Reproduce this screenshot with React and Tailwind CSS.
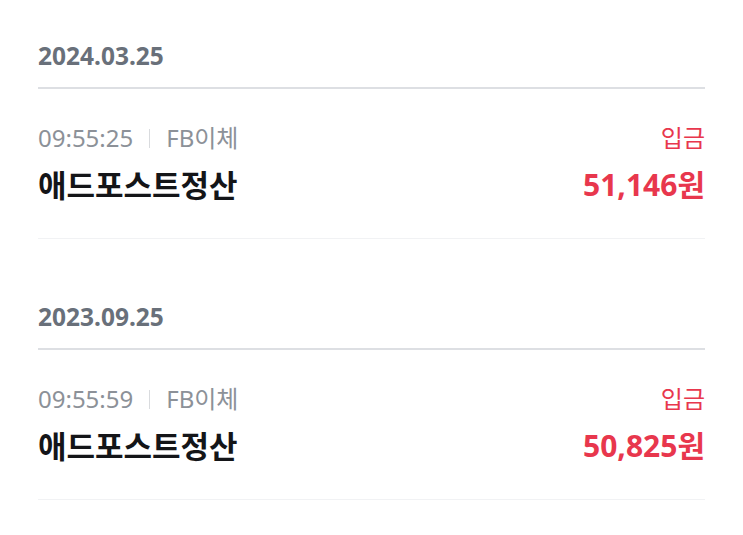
import React from 'react';

const items = [
  { date: '2024.03.25', time: '09:55:25', type: 'FB이체', title: '애드포스트정산', kind: '입금', amount: '51,146' },
  { date: '2023.09.25', time: '09:55:59', type: 'FB이체', title: '애드포스트정산', kind: '입금', amount: '50,825' },
];

const font = { fontFamily: '"Noto Sans", "Noto Sans CJK KR", sans-serif' };

export default function App() {
  return (
    <div className="w-[743px] h-[535px] bg-white px-[38px] pt-[40px]" style={font}>
      {items.map((it, i) => (
        <div key={i} className={i > 0 ? 'mt-[62px]' : ''}>
          <div className="h-[32px] leading-[32px] text-[24.5px] font-bold text-[#69707a]">{it.date}</div>
          <div className="mt-[15px] h-[2px] bg-[#dddfe3]"></div>

          <div className="mt-[33px] flex items-center justify-between h-[32px]">
            <div className="flex items-center text-[24px] leading-[32px] text-[#8c9198]">
              <span>{it.time}</span>
              <span className="mx-[16px] w-[1px] h-[19px] bg-[#d9dbde]"></span>
              <span>{it.type}</span>
            </div>
            <div className="text-[24px] leading-[32px] text-[#e8374d]">{it.kind}</div>
          </div>

          <div className="mt-[11px] flex items-center justify-between h-[40px]">
            <div className="text-[31px] leading-[40px] font-bold text-[#141518]">{it.title}</div>
            <div className="text-[30px] leading-[40px] font-bold text-[#e8374d]">{it.amount}원</div>
          </div>

          <div className="mt-[33px] h-[1px] bg-[#f1f2f4]"></div>
        </div>
      ))}
    </div>
  );
}
